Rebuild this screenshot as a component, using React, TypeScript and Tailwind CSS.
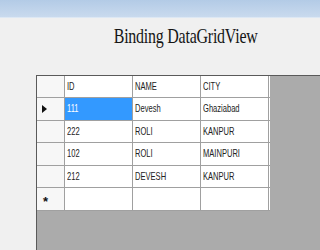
import React from "react";

type Row = { id: string; name: string; city: string };

const rows: Row[] = [
  { id: "111", name: "Devesh", city: "Ghaziabad" },
  { id: "222", name: "ROLI", city: "KANPUR" },
  { id: "102", name: "ROLI", city: "MAINPURI" },
  { id: "212", name: "DEVESH", city: "KANPUR" },
];

const heights = ["h-[23px]", "h-[22px]", "h-[23px]", "h-[22px]", "h-[23px]"];

const cellFont = {
  fontFamily: '"Liberation Sans", Arial, sans-serif',
};

function Cell({ children, selected }: { children?: React.ReactNode; selected?: boolean }) {
  return (
    <div
      className={
        "w-[68px] shrink-0 border-r border-[#a0a0a0] flex items-center pl-[2px] text-[10.5px] overflow-hidden " +
        (selected ? "bg-[#3399ff] text-white" : "bg-white text-[#222]")
      }
    >
      <span className="inline-block origin-left scale-x-[0.72] whitespace-nowrap">{children}</span>
    </div>
  );
}

export default function App() {
  return (
    <div className="w-[320px] h-[250px] bg-[#f0f0f0] overflow-hidden flex flex-col">
      <div className="h-[18px] shrink-0 bg-gradient-to-b from-[#b3cbe6] to-[#c9daee] border-b border-[#dde8f4]" />

      <div className="h-[57px] shrink-0 flex justify-center pt-[8px] pl-[52px]">
        <span
          className="inline-block text-[21px] text-[#151515] tracking-[-0.3px] leading-none scale-x-[0.76] whitespace-nowrap"
          style={{ fontFamily: '"Liberation Serif", "DejaVu Serif", serif' }}
        >
          Binding DataGridView
        </span>
      </div>

      <div className="ml-[36px] flex-1 border-l border-t border-[#5a5a5a] bg-[#ababab]" style={cellFont}>
        <div className="w-[233px] bg-white">
          {/* header */}
          <div className="flex h-[22px] border-b border-[#a0a0a0] bg-white">
            <div className="w-[28px] shrink-0 border-r border-[#a0a0a0] bg-[#f7f7f7]" />
            <Cell>ID</Cell>
            <Cell>NAME</Cell>
            <Cell>CITY</Cell>
          </div>

          {rows.map((r, i) => (
            <div key={r.id} className={"flex border-b border-[#a0a0a0] " + heights[i]}>
              <div className="w-[28px] shrink-0 border-r border-[#a0a0a0] bg-[#f7f7f7] flex items-center pl-[5px]">
                {i === 0 && (
                  <svg width="5" height="8" viewBox="0 0 5 8">
                    <path d="M0 0 L5 4 L0 8 Z" fill="#111" />
                  </svg>
                )}
              </div>
              <Cell selected={i === 0}>{r.id}</Cell>
              <Cell>{r.name}</Cell>
              <Cell>{r.city}</Cell>
            </div>
          ))}

          <div className={"flex border-b border-[#a0a0a0] " + heights[4]}>
            <div className="w-[28px] shrink-0 border-r border-[#a0a0a0] bg-[#f7f7f7] flex items-center pl-[6px] text-[13px] font-bold text-[#111] leading-none">
              <span className="mt-[4px]">*</span>
            </div>
            <Cell />
            <Cell />
            <Cell />
          </div>
        </div>
      </div>
    </div>
  );
}
